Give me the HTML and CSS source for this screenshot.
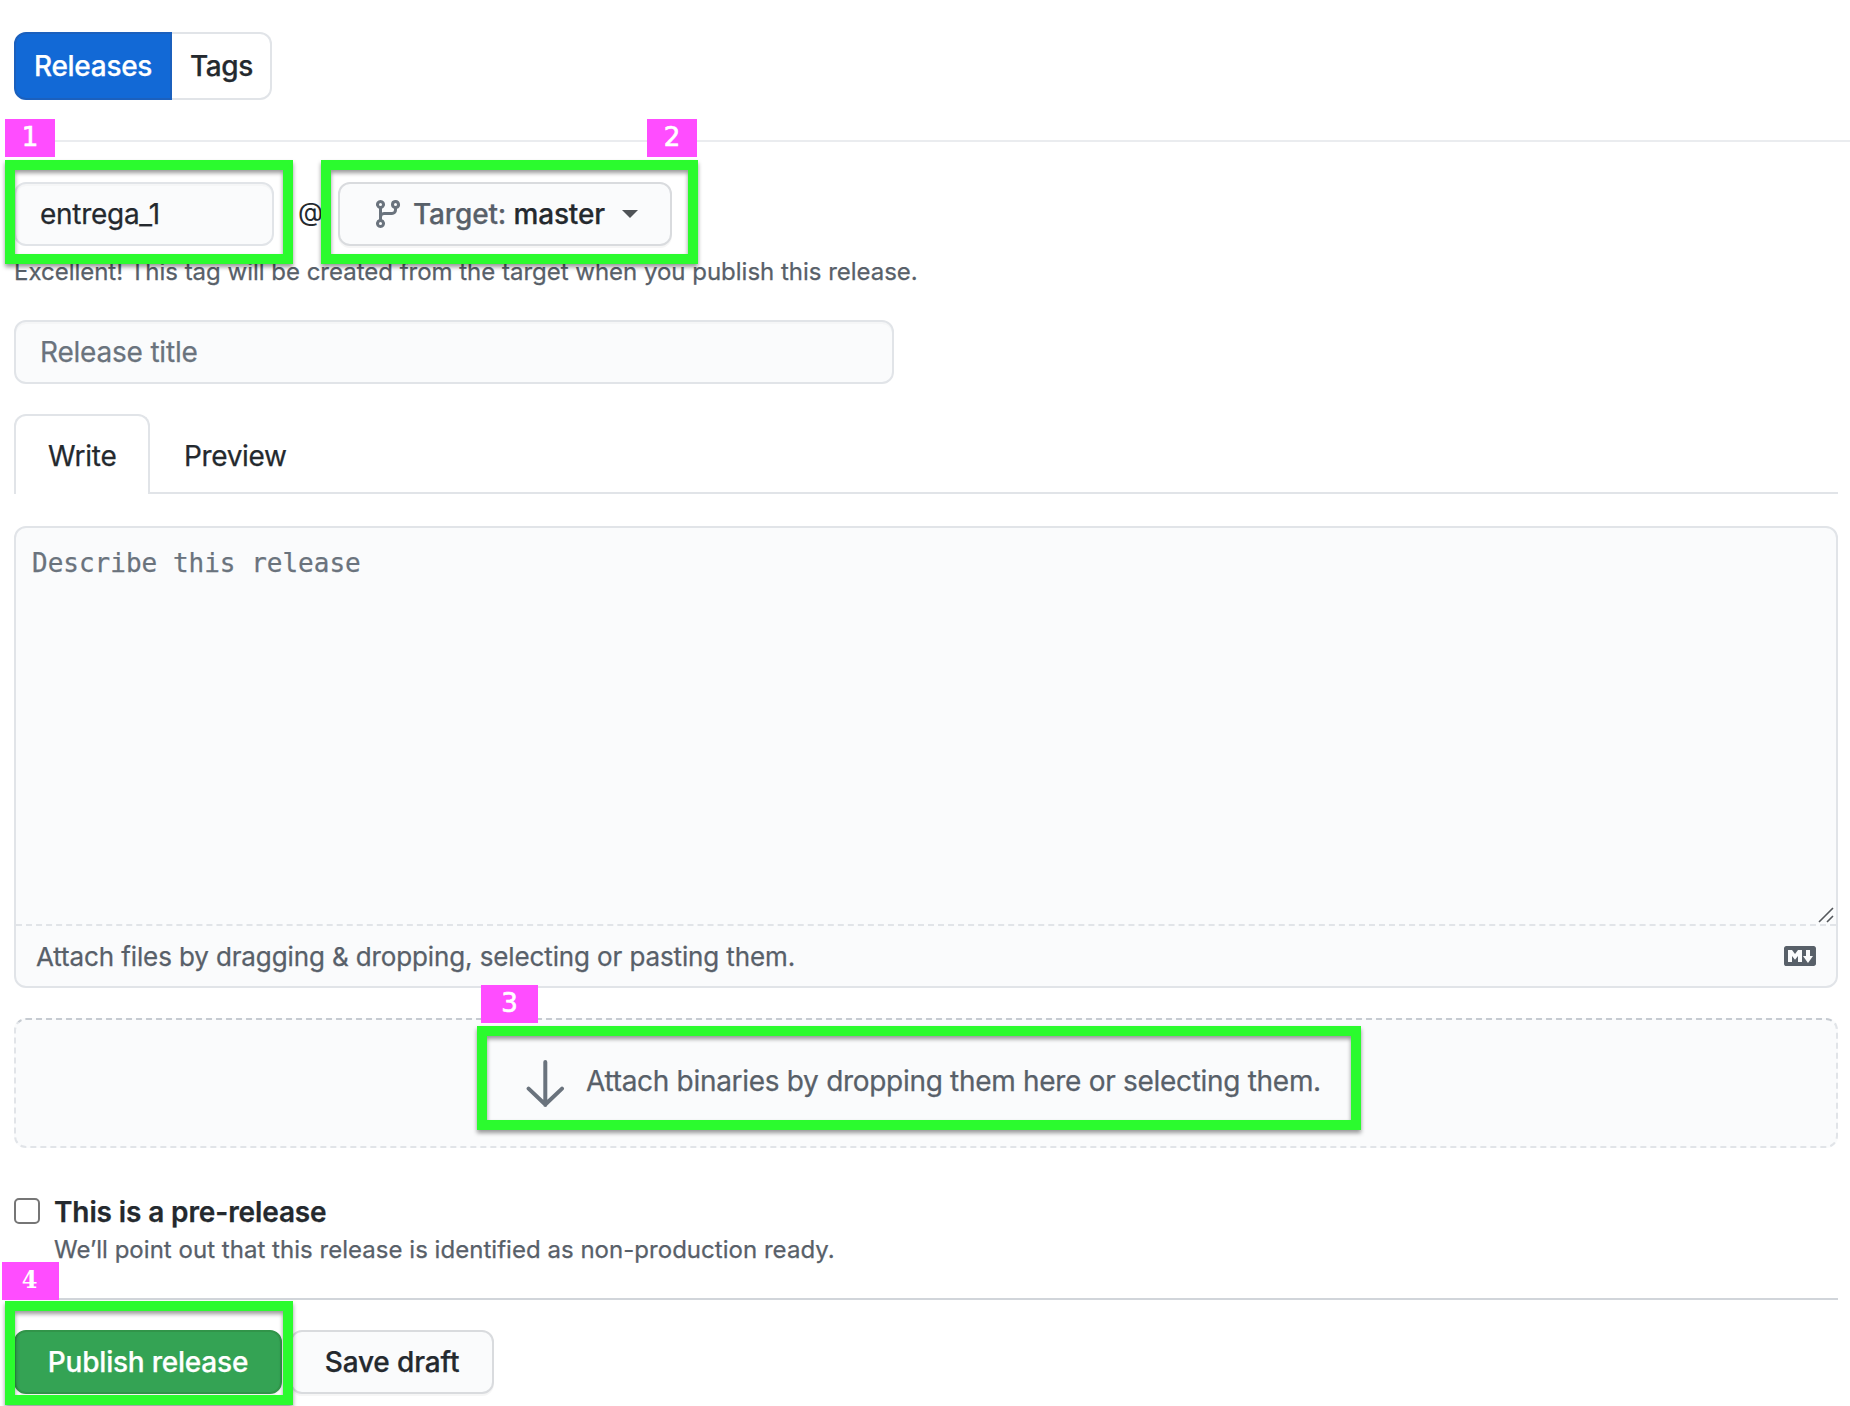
FILE: index.html
```html
<!DOCTYPE html>
<html lang="en">
<head>
<meta charset="utf-8">
<title>New release</title>
<link rel="stylesheet" href="styles.css">
</head>
<body>
<main class="page">
  <nav class="subnav">
    <a class="subnav-item selected"><span class="t t-releases">Releases</span></a><a class="subnav-item"><span class="t t-tags">Tags</span></a>
  </nav>
  <hr class="rule-top">
  <div class="target-row">
    <div class="field tag-field"><span class="t t-tag">entrega_1</span></div>
    <span class="at">@</span>
    <button class="btn target-btn">
      <svg class="branch" viewBox="0 0 16 16" width="32" height="32"><path fill-rule="evenodd" d="M11.75 2.5a.75.75 0 100 1.5.75.75 0 000-1.5zm-2.25.75a2.25 2.25 0 113 2.122V6A2.5 2.5 0 0110 8.5H6a1 1 0 00-1 1v1.128a2.251 2.251 0 11-1.5 0V5.372a2.25 2.25 0 111.5 0v1.836A2.492 2.492 0 016 7h4a1 1 0 001-1v-.628A2.25 2.25 0 019.5 3.25zM4.25 12a.75.75 0 100 1.5.75.75 0 000-1.5zM3.5 3.25a.75.75 0 111.5 0 .75.75 0 01-1.5 0z"/></svg>
      <span class="t t-target"><i>Target:</i> master</span>
      <span class="caret"></span>
    </button>
  </div>
  <p class="note"><span class="t t-note">Excellent! This tag will be created from the target when you publish this release.</span></p>
  <div class="field title-field"><span class="t t-title">Release title</span></div>
  <div class="tabs">
    <a class="tab active"><span class="t t-write">Write</span></a>
    <a class="tab"><span class="t t-preview">Preview</span></a>
  </div>
  <section class="editor">
    <div class="editor-body"><span class="t t-desc">Describe this release</span>
      <svg class="grip" viewBox="0 0 16 16" width="16" height="16"><path d="M1 15L15 1M9 15l6-6" stroke="#55585c" stroke-width="1.6" fill="none"/></svg>
    </div>
    <div class="editor-foot"><span class="t t-files">Attach files by dragging &amp; dropping, selecting or pasting them.</span>
      <svg class="md" viewBox="0 0 16 16" width="32" height="32"><path fill-rule="evenodd" d="M14.85 3H1.15C.52 3 0 3.52 0 4.15v7.69C0 12.48.52 13 1.15 13h13.69c.64 0 1.15-.52 1.15-1.15v-7.7C16 3.52 15.48 3 14.85 3zM9 11H7V8L5.5 9.92 4 8v3H2V5h2l1.5 2L7 5h2v6zm2.99.5L9.5 8H11V5h2v3h1.5l-2.51 3.5z"/></svg>
    </div>
  </section>
  <section class="dropzone">
    <svg class="arrow" viewBox="0 0 48 48" width="48" height="48"><path d="M24.3 3v43M7.6 29.6L24.3 45.5 41 29.6"/></svg>
    <span class="t t-bin">Attach binaries by dropping them here or selecting them.</span>
  </section>
  <label class="prerelease">
    <span class="checkbox"></span>
    <span class="pre-text"><b class="t t-pre">This is a pre-release</b><span class="t t-point">We’ll point out that this release is identified as non-production ready.</span></span>
  </label>
  <hr class="rule-bottom">
  <div class="actions">
    <button class="btn primary"><span class="t t-publish">Publish release</span></button>
    <button class="btn"><span class="t t-save">Save draft</span></button>
  </div>
</main>
<div class="mark m1"></div><div class="num n1">1</div>
<div class="mark m2"></div><div class="num n2">2</div>
<div class="mark m3"></div><div class="num n3">3</div>
<div class="mark m4"></div><div class="num n4">4</div>
</body>
</html>
```
FILE: styles.css
```css
* { box-sizing: border-box; }
body { margin: 0; width: 1850px; height: 1406px; overflow: hidden; position: relative; background: #fff; color: #24292e; font-family: Inter, "Liberation Sans", sans-serif; font-size: 28px; line-height: 42px; }
.page { padding: 32px 12px 0 14px; display: flex; flex-direction: column; }
hr { border: 0; height: 2px; margin: 0; }

/* Text */
.t { white-space: nowrap; -webkit-text-stroke: .25px currentColor; }
.t-releases { letter-spacing: -.3px; }
.t-tags { letter-spacing: -.4px; }
.t-tag { letter-spacing: -.28px; }
.t-target { letter-spacing: -.16px; }
.t-note { letter-spacing: -.015px; }
.t-title { letter-spacing: -.2px; }
.t-write { letter-spacing: -.2px; }
.t-preview { letter-spacing: -.35px; }
.t-files { letter-spacing: -.12px; }
.t-bin { letter-spacing: -.3px; }
.t-publish { letter-spacing: -.22px; }
.t-save { letter-spacing: -.15px; }

/* Releases / Tags switch */
.subnav { display: flex; height: 68px; font-weight: 500; }
.subnav-item { display: flex; align-items: center; padding: 0 18px; border: 2px solid #e1e4e8; border-left: 0; border-radius: 0 12px 12px 0; width: 100px; }
.subnav-item.selected { width: 158px; border: 2px solid #1b60bd; border-radius: 12px 0 0 12px; background: #1269d6; color: #fff; }
.rule-top { margin: 40px -12px 40px 0; background: #eaecef; }

/* Fields and buttons */
.target-row { display: flex; height: 64px; }
.field { display: flex; align-items: center; height: 64px; padding: 0 24px; border: 2px solid #e1e4e8; border-radius: 12px; background: #fafbfc; box-shadow: inset 0 2px 0 rgba(225,228,232,.2); }
.tag-field { width: 260px; }
.at { width: 64px; padding-left: 24px; line-height: 59px; font-size: 26px; }
.btn { display: flex; align-items: center; justify-content: center; height: 64px; padding: 0; border: 2px solid #d9dbde; border-radius: 12px; background: #fafbfc; box-shadow: 0 2px 0 rgba(27,31,35,.04); color: #24292e; font: 500 28px/40px Inter, "Liberation Sans", sans-serif; width: 204px; }
.target-btn { width: 334px; justify-content: flex-start; padding-left: 32px; }
.target-btn i { font-style: normal; color: #586069; }
.branch { fill: #6a737d; margin-right: 9px; }
.caret { border: 8px solid transparent; border-top-color: #4f5357; border-bottom: 0; margin-left: 17px; }
.note { margin: 8px 0 30px; height: 36px; line-height: 36px; font-size: 24px; color: #586069; }
.title-field { width: 880px; color: #6a737d; }

/* Editor */
.tabs { display: flex; margin-top: 30px; height: 80px; border-bottom: 2px solid #e1e4e8; }
.tab { height: 78px; padding: 0 34px; line-height: 85px; }
.tab.active { width: 136px; height: 80px; padding: 0 32px; border: 2px solid #e1e4e8; border-bottom: 0; border-radius: 12px 12px 0 0; background: #fff; line-height: 81px; }
.editor { margin-top: 32px; height: 462px; border: 2px solid #e1e4e8; border-radius: 12px; background: #fafbfc; display: flex; flex-direction: column; }
.editor-body { flex: 1; display: flex; justify-content: space-between; padding: 14px 2px 1px 16px; border-bottom: 2px dashed #e1e4e8; color: #6a737d; font: 26px/42px "DejaVu Sans Mono", monospace; }
.grip { align-self: flex-end; }
.editor-foot { height: 60px; display: flex; align-items: center; justify-content: space-between; padding: 0 20px; font-size: 26px; line-height: 40px; color: #586069; }
.t-files { padding-top: 2px; }
.md { fill: #586069; }
.dropzone { margin-top: 30px; height: 130px; border: 2px dashed #e1e4e8; border-top-color: #c6cbd1; border-radius: 12px; background: #fafbfc; display: flex; align-items: center; padding-left: 505px; color: #586069; }
.arrow { fill: none; stroke: #6a737d; stroke-width: 4; stroke-linecap: round; stroke-linejoin: round; margin-right: 17px; }
.t-bin { padding-bottom: 5px; }

/* Footer */
.prerelease { display: flex; margin-top: 43px; gap: 14px; }
.checkbox { width: 26px; height: 26px; margin-top: 7px; border: 2px solid #767676; border-radius: 5px; }
.pre-text { display: flex; flex-direction: column; }
.t-pre { font-weight: 600; line-height: 42px; letter-spacing: -.12px; }
.t-point { margin-top: -1px; font-size: 24px; line-height: 36px; letter-spacing: .03px; color: #586069; }
.rule-bottom { margin-top: 30px; background: #d1d5da; }
.actions { display: flex; gap: 8px; margin-top: 30px; }
.primary { width: 268px; background: #34a354; border-color: #319449; color: #fff; }

/* Step annotations laid over the form */
.mark { position: absolute; height: 104px; border: 10px solid #2bfb2e; filter: drop-shadow(0 3px 2px rgba(0,0,0,.4)); }
.m1 { left: 5px; top: 160px; width: 288px; }
.m2 { left: 321px; top: 160px; width: 377px; }
.m3 { left: 477px; top: 1026px; width: 884px; }
.m4 { left: 5px; top: 1301px; width: 288px; }
.num { position: absolute; width: 50px; height: 38px; background: #ff4dff; color: #fff; text-align: center; font: 26px/36px "DejaVu Sans", sans-serif; -webkit-text-stroke: .7px #fff; }
.n1 { left: 5px; top: 119px; }
.n2 { left: 647px; top: 119px; }
.n3 { left: 481px; top: 985px; width: 57px; }
.n4 { left: 2px; top: 1262px; width: 57px; padding-right: 2px; font: bold 25px/36px "DejaVu Serif Condensed", "DejaVu Serif", serif; -webkit-text-stroke: 0; }
```
